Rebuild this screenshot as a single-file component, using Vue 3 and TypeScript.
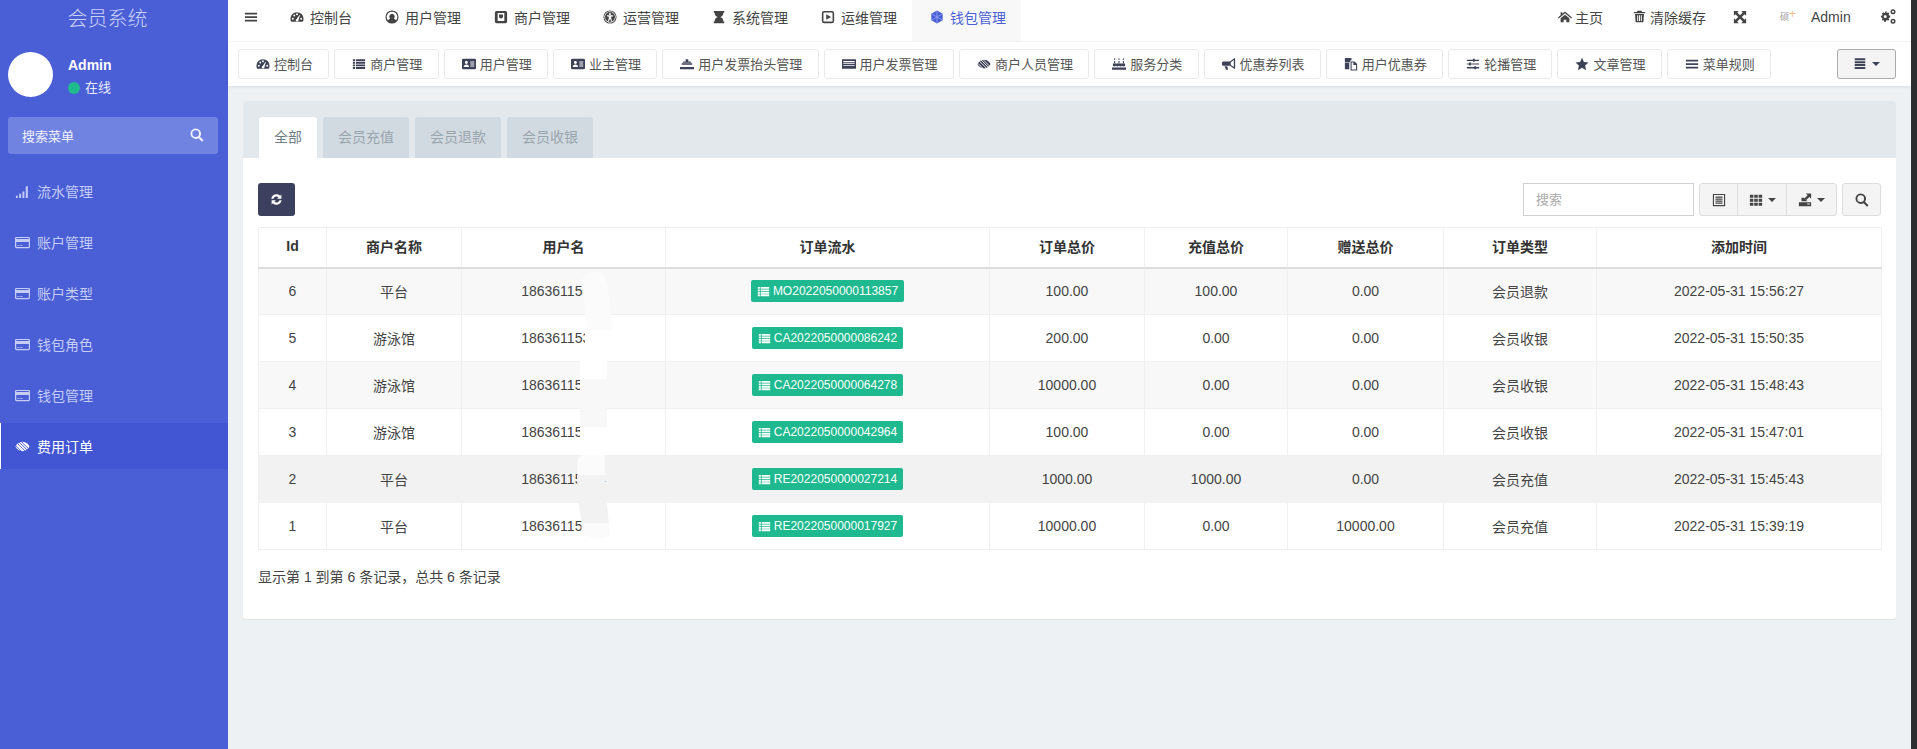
<script setup lang="ts">
type Ico = { f?: string; s?: string }
const icons: Record<string, Ico> = {
  bars: { f: 'M1 3h14v2H1zM1 7h14v2H1zM1 11h14v2H1z' },
  dash: { f: 'M8 2.500A7.500 7.500 0 0 0 .5 10c0 1.400.3 2.500 1 3.500h13c.7-1 1-2.100 1-3.500A7.500 7.500 0 0 0 8 2.500zM4.300 10a1.100 1.100 0 1 0-2.200 0 1.100 1.100 0 1 0 2.200 0zM6 6.300a1.100 1.100 0 1 0-2.200 0 1.100 1.100 0 1 0 2.200 0zM9.100 4.900a1.100 1.100 0 1 0-2.200 0 1.100 1.100 0 1 0 2.200 0zM13.900 10a1.100 1.100 0 1 0-2.200 0 1.100 1.100 0 1 0 2.200 0zM6.500 11.800a1.600 1.600 0 0 0 3 .4L11.300 6l-.6-.2-3 4.600a1.600 1.600 0 0 0-1.200 1.400z' },
  user: { f: 'M8 .5a7.500 7.500 0 1 0 0 15 7.500 7.500 0 1 0 0-15zM8 2a6 6 0 0 1 4.600 9.900c-.6-1.200-1.600-1.900-2.600-2.200a3 3 0 1 0-4 0c-1 .3-2 1-2.600 2.200A6 6 0 0 1 8 2z' },
  shop: { f: 'M3 1h10a2 2 0 0 1 2 2v10a2 2 0 0 1-2 2H3a2 2 0 0 1-2-2V3a2 2 0 0 1 2-2zM4.200 3.500v9h7.600v-9zM5.700 5h4.600v2.500a2.300 2.300 0 0 1-4.600 0z' },
  access: { f: 'M8 .5a7.500 7.500 0 1 0 0 15 7.500 7.500 0 1 0 0-15zM8 1.500a6.500 6.500 0 1 1 0 13 6.500 6.500 0 1 1 0-13zM8 2.300a5.700 5.700 0 1 0 0 11.400 5.700 5.700 0 1 0 0-11.400zM8 3.300a1.200 1.200 0 1 1 0 2.400 1.200 1.200 0 1 1 0-2.400zM4.500 6l7 0v1.100L9.300 7.700v1.800l1.100 3-1 .4L8 10l-1.400 3-1-.4 1.100-3.100V7.700L4.500 7.100z' },
  hour: { f: 'M2 1h12v2h-1c0 3-1.500 4-3.500 5 2 1 3.500 2 3.500 5h1v2H2v-2h1c0-3 1.500-4 3.500-5C4.500 7 3 6 3 3H2z' },
  play: { f: 'M3.500 1h9A2.500 2.500 0 0 1 15 3.500v9a2.500 2.500 0 0 1-2.500 2.500h-9A2.500 2.500 0 0 1 1 12.500v-9A2.500 2.500 0 0 1 3.500 1zM3.500 2.800a.7.7 0 0 0-.7.7v9c0 .4.300.7.7.7h9a.7.7 0 0 0 .7-.7v-9a.7.7 0 0 0-.7-.7zM6 4.800 11.500 8 6 11.200z' },
  cube: { f: 'M8 .5 14.500 4.200v7.600L8 15.500 1.500 11.800V4.200z', s: 'M8 1v14M2 4.500l12 7M14 4.500l-12 7' },
  list: { f: 'M1 2.500h2.500v2.200H1zM4.500 2.500H15v2.200H4.500zM1 5.500h2.500v2.200H1zM4.500 5.500H15v2.200H4.500zM1 8.500h2.500v2.200H1zM4.500 8.500H15v2.200H4.500zM1 11.500h2.500v2.200H1zM4.500 11.500H15v2.200H4.500z' },
  card: { f: 'M1.500 2h13A1.500 1.500 0 0 1 16 3.500v9a1.500 1.500 0 0 1-1.500 1.500h-13A1.500 1.500 0 0 1 0 12.500v-9A1.500 1.500 0 0 1 1.500 2zM5 4.500a1.700 1.700 0 1 0 0 3.400 1.700 1.700 0 1 0 0-3.400zM2 11.500h6c0-1.500-1-2.800-3-2.800s-3 1.300-3 2.800zM9.500 5v1.200H14V5zM9.500 7.300v1.200H14V7.300zM9.500 9.600v1.200H14V9.600z' },
  stamp: { f: 'M6.500 2.500h3v2.500h-3zM2 7h12v1.800H2zM4 5h8l1 1.500H3zM0 11.500h16V14H0z' },
  keys: { f: 'M0 2.500h16v11H0zM1.500 4.500v1.500h13V4.500zM1.500 7v1h13V7zM1.500 9v1h13V9z' },
  eye: { f: 'M8 3c3.500 0 6.300 2.300 7.500 5-1.200 2.700-4 5-7.500 5S1.700 10.700.5 8C1.700 5.300 4.500 3 8 3z' },
  cake: { f: 'M3 1l.9 1.500-.9 1-.9-1zM8 1l.9 1.500-.9 1-.9-1zM13 1l.9 1.500-.9 1-.9-1zM2.400 4.500h1.200V7H2.400zM7.400 4.500h1.200V7H7.400zM12.400 4.500h1.200V7h-1.200zM1 7.500h14V10c-1.200 1-2.300 1-3.500 0-1.200 1-2.300 1-3.500 0-1.200 1-2.300 1-3.500 0-1.200 1-2.300 1-3.500 0zM0 12h16v2.500H0z' },
  horn: { f: 'M14 1.500h1v12h-1l-5-3.500H1.500A1.500 1.500 0 0 1 0 8.500v-2A1.500 1.500 0 0 1 1.500 5H9zM13.500 3.500 10 6v3l3.500 2.500zM3 10.500h3l1 4H4.500z' },
  files: { f: 'M1 1h7.500v3H7v2H1zM1 6.500h5V14H1zM7.500 5H12l3 3v7.500H7.500zM8.700 6.200v8.100h5.100V9h-3.100V6.200z' },
  sliders: { f: 'M1 3h7V2h2v1h5v1.500h-5v1H8v-1H1zM1 7.300h2.500v-1h2v1H15v1.400H5.500v1h-2v-1H1zM1 11.500h8.500v-1h2v1H15V13h-3.500v1h-2v-1H1z' },
  star: { f: 'M8 .8l2.200 4.800 5.300.6-3.900 3.600 1 5.200L8 12.400 3.400 15l1-5.200L.5 6.200l5.300-.6z' },
  home: { f: 'M8 1.800 16 8.600l-.9 1L8 3.700.9 9.600 0 8.600 3 6V2.500h2v1.800zM3 9.500 8 5.300l5 4.200V14H9.500v-3h-3v3H3z' },
  trash: { f: 'M5.500 1h5l.8 1.500H15V4H1V2.500h3.700zM2.500 5h11l-.7 10H3.200zM5.200 6.500v7h1.200v-7zM7.400 6.500v7h1.200v-7zM9.600 6.500v7h1.200v-7z' },
  expand: { f: 'M1 1h5.500L4.800 2.800 8 6 11.200 2.800 9.500 1H15v5.500l-1.800-1.700L10 8l3.200 3.200 1.800-1.700V15H9.500l1.700-1.800L8 10l-3.200 3.200L6.500 15H1V9.500l1.800 1.700L6 8 2.800 4.800 1 6.500z' },
  cogs: { f: 'M5.500 3.800l1.100.4.900-.8 1.400 1.400-.8.900.5 1.100 1.200.2v2l-1.200.2-.5 1.100.8.900-1.400 1.400-.9-.8-1.100.5-.2 1.200h-2l-.2-1.200-1.100-.5-.9.8L.9 11.300l.8-.9-.5-1.100L0 9.100v-2l1.200-.2.5-1.100-.8-.9 1.400-1.400.9.8 1.100-.4.2-1.200h2zM4.500 6.500a1.600 1.600 0 1 0 0 3.200 1.600 1.600 0 1 0 0-3.200zM12.800.3a2.700 2.700 0 1 0 0 5.400 2.700 2.700 0 1 0 0-5.400zM12.800 1.900a1.100 1.100 0 1 1 0 2.200 1.100 1.100 0 1 1 0-2.200zM12.800 10.300a2.700 2.700 0 1 0 0 5.400 2.700 2.700 0 1 0 0-5.400zM12.800 11.900a1.100 1.100 0 1 1 0 2.200 1.100 1.100 0 1 1 0-2.200z' },
  signal: { f: 'M1 12.500h2V15H1zM4.500 10.500h2V15h-2zM8 8h2v7H8zM11.500 2.500h2.200V15h-2.200z' },
  credit: { f: 'M1.500 2h13A1.500 1.500 0 0 1 16 3.500v9a1.500 1.500 0 0 1-1.500 1.500h-13A1.500 1.500 0 0 1 0 12.500v-9A1.500 1.500 0 0 1 1.500 2zM1.800 3.200c-.3 0-.5.2-.5.5v.5h13.400v-.5c0-.3-.2-.5-.5-.5zM1.300 7.500v4.700c0 .3.200.5.500.5h12.400c.3 0 .5-.2.500-.5V7.500zM2.500 10.800h2.200v.9H2.500zM5.500 10.800H8v.9H5.500z' },
  refresh: { f: 'M8 1.500a6.500 6.500 0 0 1 4.500 1.800L14 1.800V7H8.800l1.700-1.700A3.800 3.800 0 0 0 4.300 7H1.600A6.500 6.500 0 0 1 8 1.500zM2 9h5.200l-1.700 1.700a3.800 3.800 0 0 0 6.200-1.700h2.700a6.500 6.500 0 0 1-10.900 3.700L2 14.200z' },
  search: { f: 'M6.500 .5a6 6 0 0 1 4.900 9.500l4 4-1.600 1.600-4-4A6 6 0 1 1 6.500 .5zM6.500 2.700a3.800 3.800 0 1 0 0 7.600 3.800 3.800 0 1 0 0-7.600z' },
  book: { f: 'M1 1h14v14H1zM2.300 2.300v11.400h11.400V2.300zM4 4h8v1.300H4zM4 6.300h8v1.300H4zM4 8.600h8v1.300H4zM4 10.900h8v1.300H4z' },
  grid: { f: 'M1 2h4v3.500H1zM6 2h4v3.500H6zM11 2h4v3.500h-4zM1 6.500h4V10H1zM6 6.500h4V10H6zM11 6.500h4V10h-4zM1 11h4v3.500H1zM6 11h4v3.500H6zM11 11h4v3.500h-4z' },
  exportI: { f: 'M9 .5h6v6l-2-2-3.500 3.500-2-2L11 2.500zM4 5.500h2.800L9.500 8.200 11 9.500H4zM1 10.500h14V15H1zM10.500 12v1.200h3V12z' },
}
const eyeCut = 'M2.500 4.500l9.500 9.500M4.200 3l9.500 9.500M6.500 2.500l8 8M.8 7l7.500 7.500'
const topLeft = [
  { t: '控制台', i: 'dash' }, { t: '用户管理', i: 'user' }, { t: '商户管理', i: 'shop' },
  { t: '运营管理', i: 'access' }, { t: '系统管理', i: 'hour' }, { t: '运维管理', i: 'play' },
  { t: '钱包管理', i: 'cube', on: true },
]
const sub = [
  { t: '控制台', i: 'dash' }, { t: '商户管理', i: 'list' }, { t: '用户管理', i: 'card' },
  { t: '业主管理', i: 'card' }, { t: '用户发票抬头管理', i: 'stamp' }, { t: '用户发票管理', i: 'keys' },
  { t: '商户人员管理', i: 'eye' }, { t: '服务分类', i: 'cake' }, { t: '优惠券列表', i: 'horn' },
  { t: '用户优惠券', i: 'files' }, { t: '轮播管理', i: 'sliders' }, { t: '文章管理', i: 'star' }, { t: '菜单规则', i: 'bars' },
]
const menu = [
  { t: '流水管理', i: 'signal' }, { t: '账户管理', i: 'credit' }, { t: '账户类型', i: 'credit' },
  { t: '钱包角色', i: 'credit' }, { t: '钱包管理', i: 'credit' }, { t: '费用订单', i: 'eye', on: true },
]
const tabs = ['全部', '会员充值', '会员退款', '会员收银']
const cols = [
  { t: 'Id', w: 68 }, { t: '商户名称', w: 135 }, { t: '用户名', w: 204 }, { t: '订单流水', w: 324 }, { t: '订单总价', w: 155 },
  { t: '充值总价', w: 143 }, { t: '赠送总价', w: 156 }, { t: '订单类型', w: 153 }, { t: '添加时间', w: 285 },
]
const rows = [
  { id: 6, m: '平台', u: '18636115000', no: 'MO2022050000113857', a: '100.00', b: '100.00', c: '0.00', k: '会员退款', d: '2022-05-31 15:56:27' },
  { id: 5, m: '游泳馆', u: '18636115300', no: 'CA2022050000086242', a: '200.00', b: '0.00', c: '0.00', k: '会员收银', d: '2022-05-31 15:50:35' },
  { id: 4, m: '游泳馆', u: '18636115000', no: 'CA2022050000064278', a: '10000.00', b: '0.00', c: '0.00', k: '会员收银', d: '2022-05-31 15:48:43' },
  { id: 3, m: '游泳馆', u: '18636115000', no: 'CA2022050000042964', a: '100.00', b: '0.00', c: '0.00', k: '会员收银', d: '2022-05-31 15:47:01' },
  { id: 2, m: '平台', u: '18636115004', no: 'RE2022050000027214', a: '1000.00', b: '1000.00', c: '0.00', k: '会员充值', d: '2022-05-31 15:45:43', hover: true },
  { id: 1, m: '平台', u: '18636115000', no: 'RE2022050000017927', a: '10000.00', b: '0.00', c: '10000.00', k: '会员充值', d: '2022-05-31 15:39:19' },
]
</script>

<template>
  <div class="page">
    <aside class="side">
      <div class="brand">会员系统</div>
      <div class="who">
        <div class="avatar"></div>
        <div class="who-text">
          <div class="who-name">Admin</div>
          <div class="who-state"><i class="dot"></i>在线</div>
        </div>
      </div>
      <div class="side-search">
        <span>搜索菜单</span>
        <svg class="ico s14" viewBox="0 0 16 16"><path :d="icons.search.f" fill-rule="evenodd" /></svg>
      </div>
      <ul class="menu">
        <li v-for="m in menu" :key="m.t" :class="{ on: m.on }">
          <svg class="ico s15" viewBox="0 0 16 16">
            <path :d="icons[m.i].f" fill-rule="evenodd" />
            <path v-if="m.i === 'eye'" class="eye-cut" :d="eyeCut" />
          </svg>
          <span>{{ m.t }}</span>
        </li>
      </ul>
    </aside>

    <div class="main">
      <header class="top">
        <div class="top-item burger">
          <svg class="ico s14" viewBox="0 0 16 16"><path :d="icons.bars.f" /></svg>
        </div>
        <div v-for="n in topLeft" :key="n.t" class="top-item" :class="{ on: n.on }">
          <span class="slot">
            <svg class="ico s14" viewBox="0 0 16 16">
              <path :d="icons[n.i].f" fill-rule="evenodd" />
              <path v-if="n.i === 'cube'" class="cube-lines" :d="icons.cube.s" />
            </svg>
          </span>{{ n.t }}
        </div>
        <div class="top-right">
          <div class="r-item r-home"><svg class="ico s14" viewBox="0 0 16 16"><path :d="icons.home.f" fill-rule="evenodd" /></svg>主页</div>
          <div class="r-item r-clear"><svg class="ico s13" viewBox="0 0 16 16"><path :d="icons.trash.f" fill-rule="evenodd" /></svg>清除缓存</div>
          <div class="r-item r-exp"><svg class="ico s14" viewBox="0 0 16 16"><path :d="icons.expand.f" /></svg></div>
          <div class="r-item r-admin"><span class="mini">硕<b>+</b></span>Admin</div>
          <div class="r-item r-cog"><svg class="ico s15" viewBox="0 0 16 16"><path :d="icons.cogs.f" fill-rule="evenodd" /></svg></div>
        </div>
      </header>

      <nav class="subnav">
        <div v-for="s in sub" :key="s.t" class="sub-btn">
          <span class="sub-slot">
            <svg class="ico s14" viewBox="0 0 16 16">
              <path :d="icons[s.i].f" fill-rule="evenodd" />
              <path v-if="s.i === 'eye'" class="eye-cut" :d="eyeCut" />
            </svg>
          </span>{{ s.t }}
        </div>
        <div class="more">
          <svg class="ico s14" viewBox="0 0 16 16"><path d="M2 1.500h12v2.200H2zM2 4.800h12V7H2zM2 8.100h12v2.200H2zM2 11.400h12v2.200H2z" /></svg>
          <i class="caret"></i>
        </div>
      </nav>

      <section class="content">
        <div class="panel">
          <div class="tabs">
            <div v-for="(t, i) in tabs" :key="t" class="tab" :class="{ on: i === 0 }">{{ t }}</div>
          </div>
          <div class="body">
            <div class="tools">
              <button class="refresh"><svg class="ico s13" viewBox="0 0 16 16"><path :d="icons.refresh.f" /></svg></button>
              <div class="tools-r">
                <input class="q" placeholder="搜索" />
                <div class="grp">
                  <div class="g g1"><svg class="ico s14" viewBox="0 0 16 16"><path :d="icons.book.f" fill-rule="evenodd" /></svg></div>
                  <div class="g g2"><svg class="ico s14" viewBox="0 0 16 16"><path :d="icons.grid.f" /></svg><i class="caret"></i></div>
                  <div class="g g3"><svg class="ico s14" viewBox="0 0 16 16"><path :d="icons.exportI.f" fill-rule="evenodd" /></svg><i class="caret"></i></div>
                </div>
                <div class="g-search"><svg class="ico s14" viewBox="0 0 16 16"><path :d="icons.search.f" fill-rule="evenodd" /></svg></div>
              </div>
            </div>

            <div class="table-wrap">
              <table>
                <colgroup>
                  <col v-for="c in cols" :key="c.t" :style="{ width: c.w + 'px' }" />
                </colgroup>
                <thead>
                  <tr><th v-for="c in cols" :key="c.t">{{ c.t }}</th></tr>
                </thead>
                <tbody>
                  <tr v-for="r in rows" :key="r.id" :class="{ hover: r.hover }">
                    <td>{{ r.id }}</td>
                    <td>{{ r.m }}</td>
                    <td>{{ r.u }}</td>
                    <td>
                      <span class="label">
                        <svg class="ico s13" viewBox="0 0 16 16"><path :d="icons.list.f" /></svg>{{ r.no }}
                      </span>
                    </td>
                    <td>{{ r.a }}</td>
                    <td>{{ r.b }}</td>
                    <td>{{ r.c }}</td>
                    <td>{{ r.k }}</td>
                    <td>{{ r.d }}</td>
                  </tr>
                </tbody>
              </table>
              <svg class="patches" viewBox="570 260 50 290" width="50" height="290">
                <path d="M582 283Q582 272 595 272 607 272 608 290L613 330H587Z" fill="#fbfbfb" />
                <rect x="585" y="330" width="27" height="31" fill="#fff" />
                <rect x="580" y="361" width="27" height="18" fill="#fff" />
                <rect x="580" y="379" width="27" height="48" fill="#f8f8f8" />
                <rect x="580" y="427" width="27" height="28" fill="#fff" />
                <path d="M577.500 475V463Q577.500 455 585 455H605V475Z" fill="#fbfbfb" />
                <path d="M577 475H605Q606 500 609 523H582Q577 500 577 475Z" fill="#f2f2f2" />
                <path d="M581.500 523H609L610 535Q600 541 590 537L581.500 534Z" fill="#fbfbfb" />
              </svg>
            </div>
            <div class="foot">显示第 1 到第 6 条记录，总共 6 条记录</div>
          </div>
        </div>
      </section>
    </div>
    <div class="edge"></div>
  </div>
</template>

<style>
html, body { margin: 0; padding: 0; overflow: hidden; }
</style>

<style scoped>
* { box-sizing: border-box; }
.page {
  position: relative; display: flex; width: 1917px; height: 749px; overflow: hidden;
  font-family: "Liberation Sans", "Noto Sans CJK SC", sans-serif;
  font-size: 14px; color: #333; background: #edf1f4;
}
.ico { display: block; fill: currentColor; flex: none; }
.s13 { width: 13px; height: 13px; }
.s14 { width: 14px; height: 14px; }
.s15 { width: 15px; height: 15px; }
.side { width: 228px; flex: none; background: #4a5fd6; color: #fff; }
.brand { height: 42px; padding-right: 13px; padding-top: 4px; line-height: 30px; text-align: center; font-size: 20px; font-weight: 300; color: #cbd3f5; }
.who { display: flex; height: 45px; margin: 10px 0 0 8px; gap: 15px; }
.avatar { width: 45px; height: 45px; border-radius: 50%; background: #fff; }
.who-name { font-weight: 700; line-height: 16px; margin-top: 5px; }
.who-state { display: flex; align-items: center; font-size: 13px; margin-top: 7px; line-height: 16px; color: #e8ecfb; }
.dot { width: 12px; height: 12px; border-radius: 50%; background: #1fbb8e; margin-right: 5px; }
.side-search {
  display: flex; justify-content: space-between; align-items: center;
  width: 210px; height: 37px; margin: 20px 0 0 8px; padding: 0 14px 1px; border-radius: 3px;
  background: #7083e0; font-size: 13px; color: #f0f2fc;
}
.menu { list-style: none; margin: 14px 0 0; padding: 0; }
.menu li {
  display: flex; align-items: center; gap: 7px; height: 46px; margin-bottom: 5px;
  padding-left: 15px; color: #c5cdf4;
}
.menu li.on { background: #4256d4; color: #fff; border-left: 1px solid #fff; padding-left: 14px; }
.eye-cut { fill: none; stroke: #4256d4; stroke-width: 1; }
.subnav .eye-cut { stroke: #fff; }
.cube-lines { fill: none; stroke: #8fa0ee; stroke-width: 1; }

.main { width: 1683px; flex: none; display: flex; flex-direction: column; }
.top { display: flex; height: 42px; background: #fff; border-bottom: 1px solid #f4f4f4; }
.top-item { display: flex; align-items: center; height: 33px; padding: 0 15px; color: #444; flex: none; }
.burger { width: 44px; padding: 1px 16px 0; }
.top-item.on { height: 41px; padding-bottom: 8px; background: #f8f8f8; color: #4a5fd6; }
.slot { width: 23px; display: flex; padding: 1px 0 0 3px; flex: none; }
.top-right { display: flex; margin-left: auto; }
.r-item { display: flex; align-items: center; height: 33px; color: #444; }
.r-home { width: 75px; padding-left: 15px; gap: 3px; }
.r-clear { width: 100px; padding-left: 15px; gap: 4px; }
.r-exp { width: 47px; padding-left: 15px; }
.r-admin { width: 101px; padding-left: 15px; }
.r-cog { width: 45px; padding-left: 15px; }
.mini { display: inline-flex; width: 31px; align-items: center; font-size: 9px; color: #999; }
.mini b { font-size: 12px; font-weight: 400; color: #f0c090; line-height: 10px; margin-top: -5px; }

.subnav { display: flex; align-items: center; gap: 5px; height: 44px; padding: 0 0 0 10px; background: #fff; box-shadow: 0 1px 3px rgba(0, 0, 0, .08); position: relative; }
.sub-btn {
  display: flex; align-items: center; height: 30px; padding: 0 15.300px 1px 16px; flex: none;
  border: 1px solid #e9e9e9; border-radius: 3px; font-size: 13px; color: #555;
  background: #fff;
}
.sub-slot { width: 19px; padding: 1px 0 0 1px; display: flex; flex: none; color: #3d4257; }
.more {
  display: flex; align-items: center; justify-content: center; gap: 5px;
  width: 59px; height: 30px; margin-left: auto; margin-right: 15px;
  background: #f4f4f4; border: 1px solid #aaa; border-radius: 3px; color: #3d4257;
}
.caret { width: 0; height: 0; border: 4px solid transparent; border-top-color: currentColor; border-bottom: 0; display: block; }

.content { padding: 15px 15px 0; }
.panel { width: 1653px; background: #fff; border-radius: 3px; box-shadow: 0 1px 1px rgba(0, 0, 0, .05); }
.tabs { display: flex; gap: 6px; height: 57px; padding: 16px 0 0 16px; background: #e3e8ec; border-radius: 3px 3px 0 0; }
.tab { height: 41px; line-height: 40px; padding: 0 15px; border-radius: 3px 3px 0 0; background: #d2dae1; color: #9aa5ab; }
.tab.on { background: #fff; color: #6e7d86; }
.body { padding: 25px 15px 0; height: 461px; }
.tools { display: flex; justify-content: space-between; height: 33px; }
.refresh { display: flex; align-items: center; justify-content: center; width: 37px; height: 33px; padding: 0; border: 0; border-radius: 3px; background: #3c405e; color: #fff; }
.tools-r { display: flex; gap: 5px; }
.q { width: 171px; height: 33px; padding: 0 12px; border: 1px solid #ced0d6; font: 13px "Liberation Sans", "Noto Sans CJK SC", sans-serif; outline: 0; }
.q::placeholder { color: #aaa; }
.grp { display: flex; height: 33px; border: 1px solid #ddd; border-radius: 3px; background: #f4f4f4; color: #444; }
.g { display: flex; align-items: center; justify-content: center; gap: 5px; height: 100%; }
.g1 { width: 38px; border-right: 1px solid #ddd; }
.g2 { width: 49px; border-right: 1px solid #ddd; }
.g3 { width: 49px; }
.g-search { display: flex; align-items: center; justify-content: center; width: 39px; height: 33px; border: 1px solid #ddd; border-radius: 3px; background: #f4f4f4; color: #444; }
.table-wrap { position: relative; margin-top: 11px; width: 1623px; }
table { width: 1623px; table-layout: fixed; border-collapse: collapse; }
th, td { border: 1px solid #f0f0f0; text-align: center; padding: 0; }
th { height: 40px; padding-bottom: 2px; color: #333; border-bottom: 2px solid #ddd; font-weight: 700; }
td { height: 47px; color: #444; }
tbody tr:nth-child(odd) { background: #f8f8f8; }
tbody tr.hover { background: #f2f2f2; }
tbody tr.hover td { border-color: #f2f2f2; }
.label { display: inline-flex; align-items: center; gap: 3px; height: 22px; padding: 0 6px; border-radius: 2px; background: #1fb98f; color: #fff; font-size: 12px; vertical-align: middle; }
.patches { position: absolute; left: 312px; top: 33px; display: block; }
.foot { margin-top: 19px; line-height: 16px; color: #444; }
.edge { position: absolute; left: 1911px; top: 0; width: 6px; height: 749px; background: #2c2e30; }
</style>
